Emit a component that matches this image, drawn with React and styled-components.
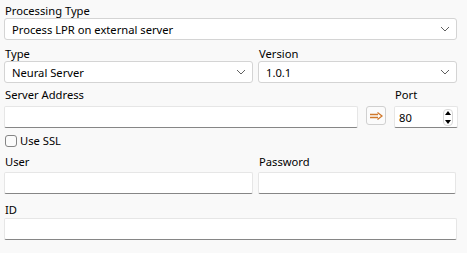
import React from "react";
import styled, { createGlobalStyle } from "styled-components";

const Global = createGlobalStyle`
  html, body { margin: 0; padding: 0; background: #f9f9f9; }
  body { font-family: "Noto Sans", "Open Sans", sans-serif; font-size: 11px; color: #000; }
`;

const Form = styled.div`
  width: 467px;
  height: 253px;
  box-sizing: border-box;
  padding: 3px 10px 0 4px;
  display: flex;
  flex-direction: column;
`;

const Label = styled.div`
  height: 15px;
  line-height: 15px;
  padding-left: 1px;
  font-size: 11.2px;
  margin-top: ${(p) => p.$mt || 0}px;
  margin-bottom: ${(p) => p.$mb || 0}px;
  white-space: nowrap;
`;

const Row = styled.div`
  display: grid;
  grid-template-columns: ${(p) => p.$cols};
  column-gap: ${(p) => p.$gap || 5}px;
  align-items: start;
`;

const Col = styled.div`
  display: flex;
  flex-direction: column;
  min-width: 0;
  padding-top: ${(p) => p.$pt || 0}px;
`;

const ComboBox = styled.div`
  height: 22px;
  box-sizing: border-box;
  border: 1px solid #d4d4d4;
  border-radius: 3px;
  background: #fff;
  display: flex;
  align-items: center;
  padding: 0 6px 0 7px;
  font-size: 11.2px;
  span { flex: 1; white-space: nowrap; }
`;

const TextBox = styled.div`
  height: 22px;
  box-sizing: border-box;
  border: 1px solid #e6e6e6;
  border-bottom: 1px solid #868686;
  border-radius: 2px;
  background: #fff;
  display: flex;
  align-items: center;
  padding: 0 4px;
  font-size: 11.2px;
`;

const ArrowButton = styled.div`
  width: 20px;
  height: 19px;
  box-sizing: border-box;
  border: 1px solid #d0d0d0;
  border-radius: 3px;
  background: #fbfbfb;
  display: flex;
  align-items: center;
  justify-content: center;
`;

const SpinButtons = styled.div`
  width: 10px;
  height: 17px;
  margin-left: auto;
  display: flex;
  flex-direction: column;
  align-items: center;
  justify-content: space-between;
  border: 1px solid #d8d8d8;
  border-radius: 4px;
  box-sizing: border-box;
  padding: 1px 0;
`;

const CheckRow = styled.label`
  display: flex;
  align-items: center;
  gap: 3px;
  margin-top: 6px;
  height: 13px;
  font-size: 11.2px;
`;

const Check = styled.span`
  width: 12px;
  height: 12px;
  box-sizing: border-box;
  border: 1px solid #858585;
  border-radius: 3px;
  background: #fbfbfb;
  margin-left: 1px;
`;

const Chevron = () => (
  <svg width="10" height="6" viewBox="0 0 10 6">
    <path d="M1 1 L5 5 L9 1" fill="none" stroke="#606060" strokeWidth="1" />
  </svg>
);

const Combo = ({ value }) => (
  <ComboBox>
    <span>{value}</span>
    <Chevron />
  </ComboBox>
);

export default function App() {
  return (
    <>
      <Global />
      <Form>
        <Label>Processing Type</Label>
        <Combo value="Process LPR on external server" />
        <Row $cols="249px 1fr" $gap={5}>
          <Col>
            <Label $mt={6}>Type</Label>
            <Combo value="Neural Server" />
          </Col>
          <Col>
            <Label $mt={6}>Version</Label>
            <Combo value="1.0.1" />
          </Col>
        </Row>
        <Row $cols="354px 20px 64px" $gap={8}>
          <Col>
            <Label $mt={4} $mb={4}>Server Address</Label>
            <TextBox />
          </Col>
          <Col $pt={23}>
            <ArrowButton>
              <svg width="14" height="8" viewBox="0 0 14 8">
                <path d="M1 2.5 H9 M1 5.5 H9" stroke="#d0782a" strokeWidth="1.3" />
                <path d="M8.5 0.5 L13 4 L8.5 7.5" fill="none" stroke="#d0782a" strokeWidth="1.3" />
              </svg>
            </ArrowButton>
          </Col>
          <Col>
            <Label $mt={4} $mb={4}>Port</Label>
            <TextBox>
              80
              <SpinButtons>
                <svg width="6" height="4" viewBox="0 0 6 4"><path d="M0 4 L3 0 L6 4Z" fill="#000" /></svg>
                <svg width="6" height="4" viewBox="0 0 6 4"><path d="M0 0 L3 4 L6 0Z" fill="#000" /></svg>
              </SpinButtons>
            </TextBox>
          </Col>
        </Row>
        <CheckRow>
          <Check />
          Use SSL
        </CheckRow>
        <Row $cols="249px 198px" $gap={5}>
          <Col>
            <Label $mt={7} $mb={3}>User</Label>
            <TextBox />
          </Col>
          <Col>
            <Label $mt={7} $mb={3}>Password</Label>
            <TextBox />
          </Col>
        </Row>
        <Label $mt={8} $mb={1}>ID</Label>
        <TextBox />
      </Form>
    </>
  );
}
